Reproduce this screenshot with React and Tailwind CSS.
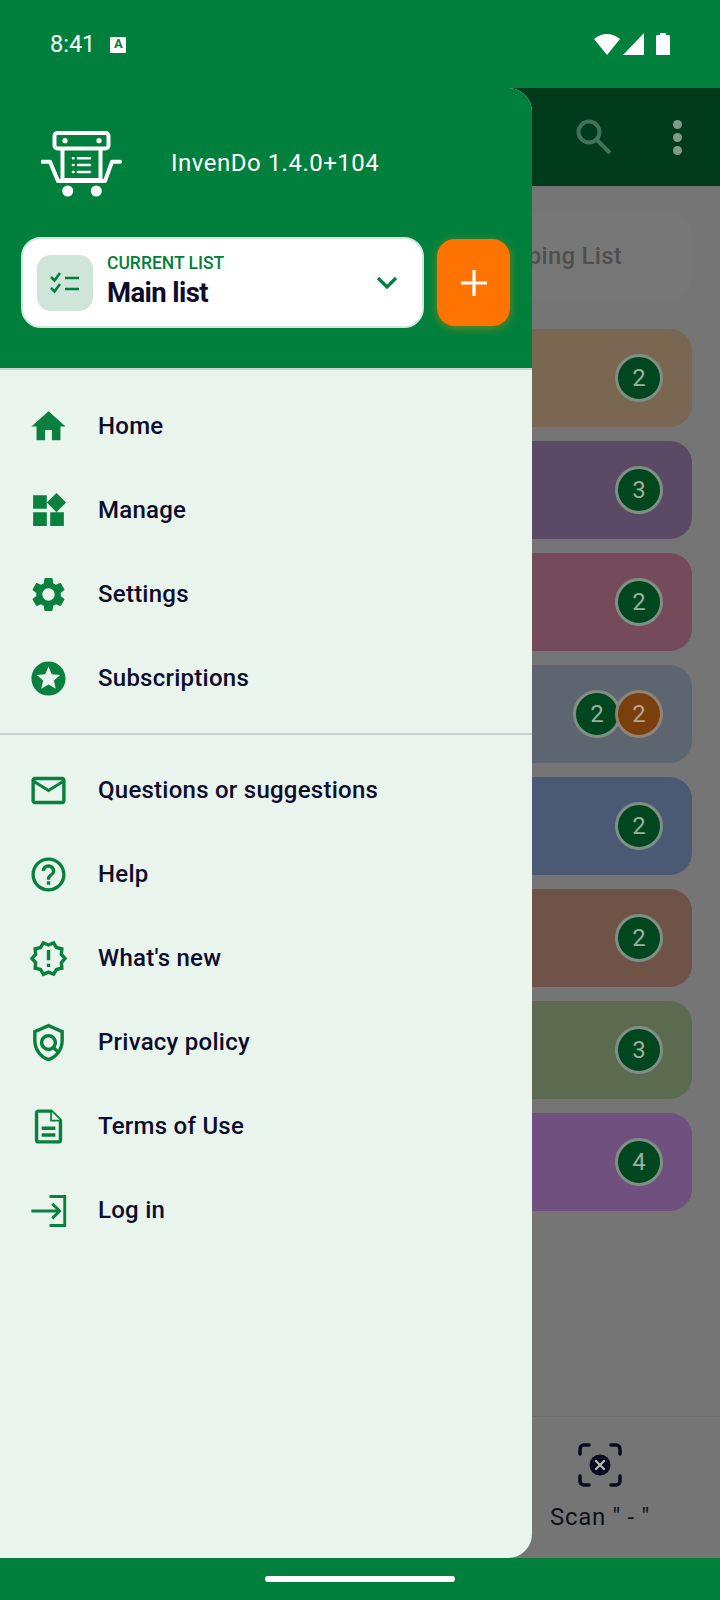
import React from "react";

const green = "#00803c";

function Icon({ d, children }) {
  return (
    <svg viewBox="0 0 24 24" className="w-[41px] h-[41px] shrink-0 text-[#0a803f]" fill="currentColor">
      {d && <path d={d} />}
      {children}
    </svg>
  );
}

const mainItems = [
  { label: "Home", d: "M10 20v-6h4v6h5v-8h3L12 3 2 12h3v8z" },
  { label: "Manage", d: "M13 13v8h8v-8h-8zM3 21h8v-8H3v8zM3 3v8h8V3H3zm13.66-1.31L11 7.34 16.66 13l5.66-5.66-5.66-5.65z" },
  { label: "Settings", d: "M19.14 12.94c.04-.3.06-.61.06-.94 0-.32-.02-.64-.07-.94l2.03-1.58c.18-.14.23-.41.12-.61l-1.92-3.32c-.12-.22-.37-.29-.59-.22l-2.39.96c-.5-.38-1.03-.7-1.62-.94l-.36-2.54c-.04-.24-.24-.41-.48-.41h-3.84c-.24 0-.43.17-.47.41l-.36 2.54c-.59.24-1.13.57-1.62.94l-2.39-.96c-.22-.08-.47 0-.59.22L2.74 8.87c-.12.21-.08.47.12.61l2.03 1.58c-.05.3-.09.63-.09.94s.02.64.07.94l-2.03 1.58c-.18.14-.23.41-.12.61l1.92 3.32c.12.22.37.29.59.22l2.39-.96c.5.38 1.03.7 1.62.94l.36 2.54c.05.24.24.41.48.41h3.84c.24 0 .44-.17.47-.41l.36-2.54c.59-.24 1.13-.56 1.62-.94l2.39.96c.22.08.47 0 .59-.22l1.92-3.32c.12-.22.07-.47-.12-.61l-2.01-1.58zM12 15.6c-1.98 0-3.6-1.62-3.6-3.6s1.62-3.6 3.6-3.6 3.6 1.62 3.6 3.6-1.62 3.6-3.6 3.6z" },
  { label: "Subscriptions", d: "M11.99 2C6.47 2 2 6.48 2 12s4.47 10 9.99 10C17.52 22 22 17.52 22 12S17.52 2 11.99 2zm4.24 16L12 15.45 7.77 18l1.12-4.81-3.73-3.23 4.92-.42L12 5l1.92 4.53 4.92.42-3.73 3.23L16.23 18z" },
];

const otherItems = [
  { label: "Questions or suggestions", d: "M20 4H4c-1.1 0-1.99.9-1.99 2L2 18c0 1.1.9 2 2 2h16c1.1 0 2-.9 2-2V6c0-1.1-.9-2-2-2zm0 14H4V8l8 5 8-5v10zm-8-7L4 6h16l-8 5z" },
  { label: "Help", d: "M11 18h2v-2h-2v2zm1-16C6.48 2 2 6.48 2 12s4.48 10 10 10 10-4.48 10-10S17.52 2 12 2zm0 18c-4.41 0-8-3.59-8-8s3.59-8 8-8 8 3.59 8 8-3.59 8-8 8zm0-14c-2.21 0-4 1.79-4 4h2c0-1.1.9-2 2-2s2 .9 2 2c0 2-3 1.75-3 5h2c0-2.25 3-2.5 3-5 0-2.21-1.79-4-4-4z" },
  { label: "What's new", d: "m23 12-2.44-2.78.34-3.68-3.61-.82-1.89-3.18L12 3 8.6 1.54 6.71 4.72l-3.61.81.34 3.68L1 12l2.44 2.78-.34 3.69 3.61.82 1.89 3.18L12 21l3.4 1.46 1.89-3.18 3.61-.82-.34-3.68L23 12zm-4.51 2.11.26 2.79-2.74.62-1.43 2.41L12 18.82l-2.58 1.11-1.43-2.41-2.74-.62.26-2.8L3.66 12l1.85-2.12-.26-2.78 2.74-.61 1.43-2.41L12 5.18l2.58-1.11 1.43 2.41 2.74.62-.26 2.79L20.34 12l-1.85 2.11zM11 15h2v2h-2zm0-8h2v6h-2z" },
  { label: "Privacy policy", d: "M21 5l-9-4-9 4v6c0 5.55 3.84 10.74 9 12 5.16-1.26 9-6.45 9-12V5zm-2 6c0 1.85-.51 3.65-1.38 5.21l-1.45-1.45c1.29-1.94 1.07-4.58-.64-6.29-1.95-1.95-5.12-1.95-7.07 0-1.95 1.95-1.95 5.12 0 7.07 1.71 1.71 4.35 1.92 6.29.64l1.72 1.72c-1.19 1.42-2.73 2.51-4.47 3.04C7.98 19.69 5 15.52 5 11V6.3l7-3.11 7 3.11V11zm-7 4c-1.66 0-3-1.34-3-3s1.34-3 3-3 3 1.34 3 3-1.34 3-3 3z" },
  { label: "Terms of Use", d: "M8 16h8v2H8zm0-4h8v2H8zm6-10H6c-1.1 0-2 .9-2 2v16c0 1.1.89 2 1.99 2H18c1.1 0 2-.9 2-2V8l-6-6zm4 18H6V4h7v5h5v11zM14 3.5 18.5 8H14z" },
  {
    label: "Log in",
    icon: (
      <Icon>
        <path d="M12.6 3.8h8.9v17h-8.9M2 12.3h16M14.2 8l4.3 4.3-4.3 4.3" fill="none" stroke="currentColor" strokeWidth="1.7" />
      </Icon>
    ),
  },
];

function MenuRow({ item }) {
  return (
    <div className="flex h-[84px] items-center gap-[29px] pl-[28px]">
      {item.icon || <Icon d={item.d} />}
      <span className="text-[24px] font-medium tracking-[0.25px] text-[#0c0c2c]">{item.label}</span>
    </div>
  );
}

function Logo() {
  return (
    <svg width="82" height="66" viewBox="0 0 82 66" fill="none" stroke="white" strokeWidth="4" strokeLinejoin="round" strokeLinecap="round" className="shrink-0">
      <rect x="13.5" y="2" width="54" height="15.5" rx="3" />
      <circle cx="24" cy="9.7" r="2.6" fill="white" stroke="none" />
      <circle cx="58" cy="9.7" r="2.6" fill="white" stroke="none" />
      <path d="M21.5 18v31h38V18" />
      <path d="M1 30.7h8l8 19.3h47l7-19.3h8" />
      <path d="M32 27.3h.5M32 34h.5M32 41h.5" strokeWidth="2.6" />
      <path d="M37 27.3h12M37 34h12M37 41h12" strokeWidth="2.6" />
      <circle cx="26.7" cy="60" r="5.5" fill="white" stroke="none" />
      <circle cx="55.3" cy="60" r="5.5" fill="white" stroke="none" />
    </svg>
  );
}

function StatusBar() {
  return (
    <div className="flex h-[88px] items-center justify-between bg-[#00803c] pl-[50px] pr-[50px] text-white">
      <div className="flex items-center gap-[15px] pt-[2px]">
        <span className="text-[23.5px] leading-none">8:41</span>
        <div className="flex h-[16px] w-[16px] items-start justify-center rounded-[1px] bg-white text-[13px] font-bold leading-[14px] text-[#00803c]">A</div>
      </div>
      <div className="flex items-center">
        <svg width="26" height="22" viewBox="0 0 26 22" fill="white"><path d="M0 6Q13-4 26 6L13 22z" /></svg>
        <svg width="21" height="22" viewBox="0 0 21 22" fill="white" className="ml-[3px]"><path d="M21 0v22H0z" /></svg>
        <svg width="14" height="22" viewBox="0 0 14 22" fill="white" className="ml-[12px]"><path d="M4 2V0h6v2h2.5c.8 0 1.5.7 1.5 1.5V22H0V3.5C0 2.7.7 2 1.5 2z" /></svg>
      </div>
    </div>
  );
}

function Badge({ n, orange }) {
  return (
    <div className={`flex h-[48px] w-[48px] items-center justify-center rounded-full border-[3px] text-[24px] leading-none ${orange ? "border-[#8f8379] bg-[#7a3f0a] text-[#b2a595]" : "border-[#7f8f83] bg-[#00471f] text-[#9bb09f]"}`}>
      {n}
    </div>
  );
}

const cards = [
  { bg: "bg-[#7a6751]", badges: [2] },
  { bg: "bg-[#5a4a66]", badges: [3] },
  { bg: "bg-[#754a5a]", badges: [2] },
  { bg: "bg-[#5d6670]", badges: [2], orange: 2 },
  { bg: "bg-[#4a5a75]", badges: [2] },
  { bg: "bg-[#6f5248]", badges: [2] },
  { bg: "bg-[#5c6a50]", badges: [3] },
  { bg: "bg-[#70507f]", badges: [4] },
];

function BackScreen() {
  return (
    <div className="flex h-full flex-col bg-[#757575]">
      <div className="flex h-[98px] items-center justify-end gap-[60px] bg-[#003b1c] pr-[38px]">
        <svg width="38" height="38" viewBox="0 0 38 38" fill="none" stroke="#44705a" strokeWidth="4"><circle cx="14" cy="14" r="10.5" /><path d="M22 22l13 13" /></svg>
        <div className="flex flex-col gap-[4px]">
          <div className="h-[9px] w-[9px] rounded-full bg-[#7f9c8b]" />
          <div className="h-[9px] w-[9px] rounded-full bg-[#7f9c8b]" />
          <div className="h-[9px] w-[9px] rounded-full bg-[#7f9c8b]" />
        </div>
      </div>
      <div className="mx-[28px] mt-[28px] flex h-[84px] items-center justify-end rounded-[20px] bg-[#777777] pr-[70px]">
        <span className="text-[24px] font-medium tracking-[0.25px] text-[#4f4f4f]">Shopping List</span>
      </div>
      <div className="mx-[28px] mt-[31px] flex flex-col gap-[14px]">
        {cards.map((c, i) => (
          <div key={i} className={`flex h-[98px] items-center justify-end rounded-[22px] pr-[29px] ${c.bg}`}>
            {c.badges.map((b, j) => (
              <Badge key={j} n={b} />
            ))}
            {c.orange && <div className="-ml-[6px]"><Badge n={c.orange} orange /></div>}
          </div>
        ))}
      </div>
      <div className="mt-auto flex h-[142px] flex-col items-center border-t border-[#6c6c6c] pl-[480px] pt-[26px]">
        <svg width="44" height="44" viewBox="0 0 44 44" fill="none" stroke="#0a0a1e" strokeWidth="3.5" strokeLinecap="round">
          <path d="M2 11V6a4 4 0 0 1 4-4h5M33 2h5a4 4 0 0 1 4 4v5M42 33v5a4 4 0 0 1-4 4h-5M11 42H6a4 4 0 0 1-4-4v-5" />
          <circle cx="22" cy="22" r="10.5" fill="#0a0a1e" stroke="none" />
          <path d="M18 18l8 8M26 18l-8 8" stroke="#b9b9b9" strokeWidth="2.2" />
        </svg>
        <span className="mt-[14px] text-[24px] leading-[32px] tracking-[0.7px] text-[#101018]">Scan " - "</span>
      </div>
    </div>
  );
}

function Drawer() {
  return (
    <div className="absolute inset-y-0 left-0 flex w-[532px] flex-col overflow-hidden rounded-r-[24px] bg-[#e9f4ed]">
      <div className="h-[282px] shrink-0 border-b-2 border-[#c8d5cd] bg-[#00803c]">
        <div className="flex items-center gap-[48px] pl-[41px] pt-[43px]">
          <Logo />
          <span className="-mt-[2px] text-[24px] leading-none tracking-[0.5px] text-white">InvenDo 1.4.0+104</span>
        </div>
        <div className="mt-[40px] flex items-center gap-[13px] pl-[21px]">
          <div className="flex h-[91px] w-[403px] items-center rounded-[20px] border-2 border-[#d3e8db] bg-white pl-[14px] pr-[24px]">
            <div className="flex h-[56px] w-[56px] items-center justify-center rounded-[14px] bg-[#d0e5d9]">
              <svg width="30" height="24" viewBox="0 0 30 24" fill="none" stroke={green} strokeWidth="2.5">
                <path d="M1 6l3.5 3.5L10 2M1 17l3.5 3.5L10 13M15 7h14M15 18h14" />
              </svg>
            </div>
            <div className="ml-[14px] flex flex-1 flex-col">
              <span className="-mt-[2px] text-[17.5px] font-medium leading-[20px] text-[#00803c]">CURRENT LIST</span>
              <span className="mt-[3px] text-[27.5px] font-bold leading-[34px] tracking-[-0.6px] text-[#0c0c2c]">Main list</span>
            </div>
            <svg width="22" height="14" viewBox="0 0 22 14" fill="none" stroke={green} strokeWidth="3.2">
              <path d="M2 2l9 9 9-9" />
            </svg>
          </div>
          <div className="flex h-[87px] w-[73px] items-center justify-center rounded-[18px] bg-[#ff7300] shadow-[0_2px_10px_rgba(255,140,0,0.45)]">
            <svg width="26" height="26" viewBox="0 0 26 26" stroke="white" strokeWidth="3.2"><path d="M13 0v26M0 13h26" /></svg>
          </div>
        </div>
      </div>
      <div className="pt-[14px]">
        {mainItems.map((item) => (
          <MenuRow key={item.label} item={item} />
        ))}
      </div>
      <div className="mt-[13px] mb-[13px] h-[2px] bg-[#c9d2d0]" />
      <div>
        {otherItems.map((item) => (
          <MenuRow key={item.label} item={item} />
        ))}
      </div>
    </div>
  );
}

export default function App() {
  return (
    <div className="flex h-[1600px] w-[720px] flex-col overflow-hidden bg-[#00803c] font-['Roboto',sans-serif]">
      <StatusBar />
      <div className="relative flex-1">
        <BackScreen />
        <Drawer />
      </div>
      <div className="flex h-[42px] items-center justify-center bg-[#00803c]">
        <div className="h-[6px] w-[190px] rounded-full bg-white" />
      </div>
    </div>
  );
}
